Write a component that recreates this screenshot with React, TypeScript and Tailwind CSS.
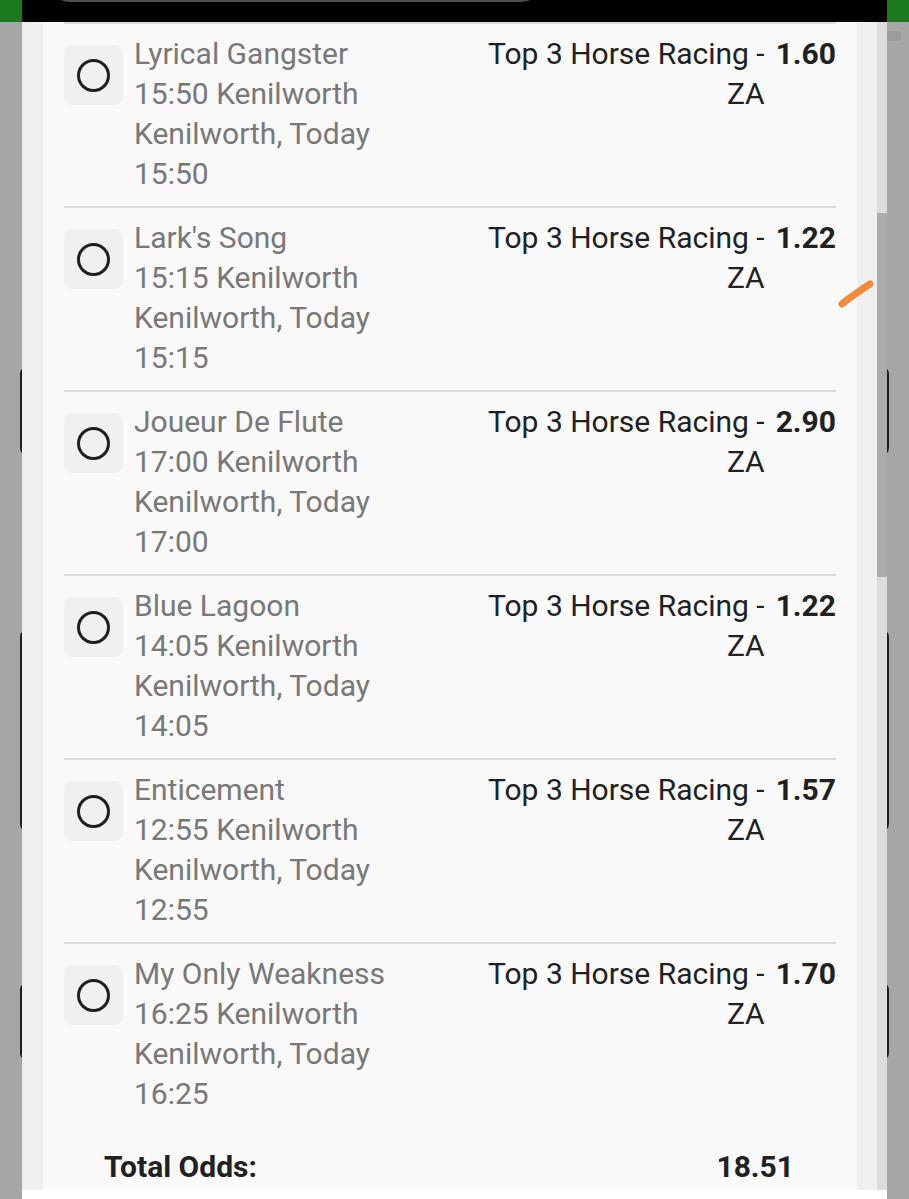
import React from 'react';

type Selection = {
  horse: string;
  time: string;
  odds: string;
};

const selections: Selection[] = [
  { horse: 'Lyrical Gangster', time: '15:50', odds: '1.60' },
  { horse: "Lark's Song", time: '15:15', odds: '1.22' },
  { horse: 'Joueur De Flute', time: '17:00', odds: '2.90' },
  { horse: 'Blue Lagoon', time: '14:05', odds: '1.22' },
  { horse: 'Enticement', time: '12:55', odds: '1.57' },
  { horse: 'My Only Weakness', time: '16:25', odds: '1.70' },
];

const SelectionRow: React.FC<{ item: Selection }> = ({ item }) => (
  <div className="flex border-t-2 border-[#dcdcdc] pt-[10px] pb-[12px]">
    {/* Radio */}
    <div className="mt-[11px] flex h-[60px] w-[59px] shrink-0 items-center justify-center rounded-lg bg-[#f0f0f0]">
      <div className="h-[33px] w-[33px] rounded-full border-[3px] border-[#1f1f1f]" />
    </div>

    {/* Horse details */}
    <div className="ml-[11px] flex-1 text-[#787878]">
      <div>{item.horse}</div>
      <div>{item.time} Kenilworth</div>
      <div>Kenilworth, Today</div>
      <div>{item.time}</div>
    </div>

    {/* Market + odds */}
    <div className="w-[294px] text-right text-[#212121]">Top 3 Horse Racing - ZA</div>
    <div className="ml-[11px] font-bold text-[#212121]">{item.odds}</div>
  </div>
);

export default function App() {
  return (
    <div
      className="relative h-[1199px] w-[909px] overflow-hidden bg-[#a6a6a6]"
      style={{ fontFamily: 'Roboto, "Noto Sans", sans-serif' }}
    >
      {/* Dimmed page behind the modal */}
      <div className="h-[22px] bg-[#1c7a1c]" />
      <div className="mx-[20px] flex flex-col pt-[344px]">
        <div className="h-[90px] rounded-lg border-2 border-[#1e1e1e]" />
        <div className="mt-[173px] h-[203px] rounded-lg border-2 border-[#1e1e1e]" />
        <div className="mt-[150px] h-[79px] rounded-lg border-2 border-[#1e1e1e]" />
      </div>
      <div className="absolute left-[887px] top-[31px] h-[10px] w-[14px] bg-[#9c9c9c]" />

      {/* Modal */}
      <div className="absolute left-[22px] top-0 flex h-[1199px] w-[865px] flex-col">
        {/* Header */}
        <div className="relative h-[22px] shrink-0 overflow-hidden bg-black">
          <div className="absolute left-[27px] top-[-40px] h-[42px] w-[493px] rounded-full border-2 border-[#4d4d4d]" />
        </div>

        {/* Body */}
        <div className="flex h-[1168px] bg-[#efefef]">
          <div className="w-[21px] shrink-0" />
          <div className="flex w-[814px] flex-col overflow-hidden bg-[#f9f9f9] px-[21px] text-[30px] leading-[40px]">
            {selections.map((item) => (
              <SelectionRow key={item.horse} item={item} />
            ))}

            <div className="mt-[21px] flex justify-between pl-[40px] pr-[42px] text-[30px] font-bold text-[#212121]">
              <span>Total Odds:</span>
              <span>18.51</span>
            </div>
          </div>
          <div className="w-[20px] shrink-0" />
          {/* Scrollbar */}
          <div className="flex w-[10px] shrink-0 flex-col bg-[#dcdcdc]">
            <div className="mt-[191px] h-[364px] bg-[#acacac]" />
          </div>
        </div>

        <div className="h-[9px] bg-white" />
      </div>

      {/* Orange pen mark */}
      <svg className="absolute left-[834px] top-[274px]" width="44" height="38" viewBox="0 0 44 38">
        <path d="M8 30 C 15 24, 24 18, 36 10" stroke="#f38a3c" strokeWidth="7" strokeLinecap="round" fill="none" />
      </svg>
    </div>
  );
}
